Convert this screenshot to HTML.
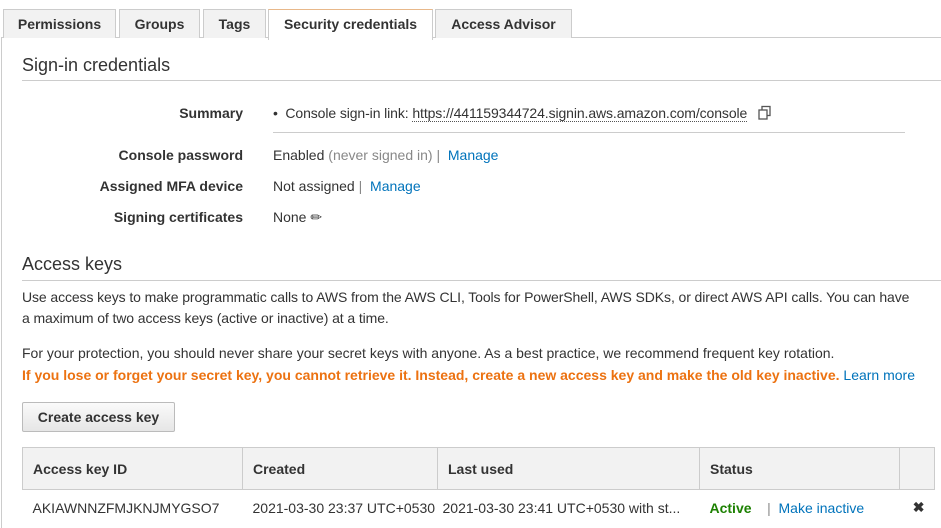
<!DOCTYPE html>
<html><head><style>
body{margin:0;width:941px;height:518px;overflow:hidden;background:#fff;font-family:"Liberation Sans",Arial,sans-serif;font-size:14px;color:#16191f;position:relative}
.a{position:absolute;white-space:nowrap}
.tab{position:absolute;top:9px;height:28px;background:#f2f2f2;border:1px solid #ccc;border-bottom:none;font-weight:bold;font-size:14px;line-height:28px;text-align:center;color:#333}
.lbl{position:absolute;right:698px;font-weight:bold;color:#333}
.blue{color:#0073bb}
.gray{color:#888}
th,td{text-align:left;padding:0 0 0 10px}
</style></head><body>
<div class="a" style="left:1px;top:37px;width:945px;height:490px;border-left:1px solid #ccc;border-top:1px solid #ccc"></div>
<div class="tab" style="left:3px;width:111px">Permissions</div>
<div class="tab" style="left:119px;width:79px">Groups</div>
<div class="tab" style="left:203px;width:61px">Tags</div>
<div class="tab" style="left:268px;width:163px;background:#fff;height:30px;border-top:1px solid #e8b88a">Security credentials</div>
<div class="tab" style="left:435px;width:135px">Access Advisor</div>

<div class="a" style="left:22px;top:55px;font-size:18px;color:#333">Sign-in credentials</div>
<div class="a" style="left:22px;top:80px;width:919px;border-top:1px solid #ccc"></div>

<div class="lbl" style="top:105px">Summary</div>
<div class="a" style="left:273px;top:105px;color:#333;letter-spacing:-0.1px">•&nbsp; Console sign-in link: <span style="border-bottom:1px dotted #555">https://441159344724.signin.aws.amazon.com/console</span>
<svg width="16" height="16" viewBox="0 0 16 16" style="vertical-align:-3px;margin-left:6px"><rect x="5" y="1.5" width="8" height="9" fill="#fff" stroke="#555" stroke-width="1.3"/><rect x="2" y="5" width="8" height="9" fill="#fff" stroke="#555" stroke-width="1.3"/></svg></div>
<div class="a" style="left:273px;top:132px;width:632px;border-top:1px solid #ccc"></div>

<div class="lbl" style="top:147px">Console password</div>
<div class="a" style="left:273px;top:147px;color:#333">Enabled <span class="gray">(never signed in)</span><span class="gray">&nbsp;|&nbsp;</span> <span class="blue">Manage</span></div>
<div class="lbl" style="top:178px">Assigned MFA device</div>
<div class="a" style="left:273px;top:178px;color:#333">Not assigned <span class="gray">|&nbsp;</span> <span class="blue">Manage</span></div>
<div class="lbl" style="top:209px">Signing certificates</div>
<div class="a" style="left:273px;top:209px;color:#333">None <span style="font-size:14px">✏</span></div>

<div class="a" style="left:22px;top:254px;font-size:18px;color:#333">Access keys</div>
<div class="a" style="left:22px;top:280px;width:919px;border-top:1px solid #ccc"></div>
<div class="a" style="left:22px;top:287px;line-height:21px;color:#333;letter-spacing:-0.1px">Use access keys to make programmatic calls to AWS from the AWS CLI, Tools for PowerShell, AWS SDKs, or direct AWS API calls. You can have<br>a maximum of two access keys (active or inactive) at a time.</div>
<div class="a" style="left:22px;top:345px;color:#333">For your protection, you should never share your secret keys with anyone. As a best practice, we recommend frequent key rotation.</div>
<div class="a" style="left:22px;top:367px;color:#ec7211;font-weight:bold">If you lose or forget your secret key, you cannot retrieve it. Instead, create a new access key and make the old key inactive. <span class="blue" style="font-weight:normal">Learn more</span></div>

<div class="a" style="left:22px;top:402px;width:151px;height:28px;border:1px solid #bbb;border-radius:2px;background:linear-gradient(#fafafa,#e6e6e6);font-weight:bold;line-height:28px;text-align:center;color:#333">Create access key</div>

<table class="a" style="left:22px;top:447px;border-collapse:collapse;width:913px;font-size:14px;color:#333">
<tr style="height:42px;background:#f2f2f2;font-weight:bold"><th style="width:209px;border:1px solid #ccc">Access key ID</th><th style="width:184px;border:1px solid #ccc">Created</th><th style="width:251px;border:1px solid #ccc">Last used</th><th style="width:189px;border:1px solid #ccc">Status</th><th style="border:1px solid #ccc"></th></tr>
<tr style="height:36px"><td>AKIAWNNZFMJKNJMYGSO7</td><td>2021-03-30 23:37 UTC+0530</td><td style="padding-left:5px">2021-03-30 23:41 UTC+0530 with st...</td><td><b style="color:#1d8102">Active</b> <span class="gray">&nbsp;&nbsp;&nbsp;|&nbsp;</span> <span class="blue">Make inactive</span></td><td style="text-align:right;padding-right:10px;font-weight:bold">✖</td></tr>
</table>
</body></html>
